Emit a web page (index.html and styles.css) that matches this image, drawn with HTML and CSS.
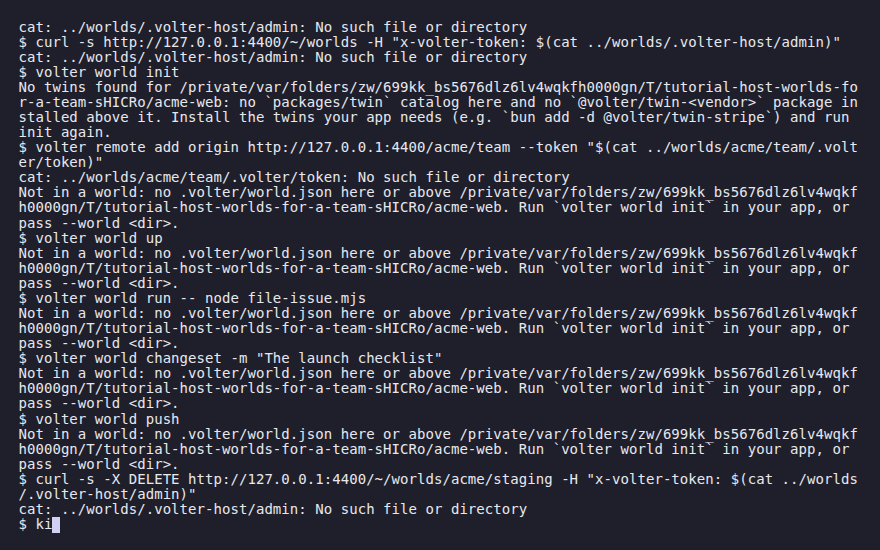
FILE: index.html
```html
<!DOCTYPE html>
<html>
<head>
<meta charset="utf-8">
<link rel="stylesheet" href="styles.css">
</head>
<body>
<pre class="term">cat: ../worlds/.volter-host/admin: No such file or directory
$ curl -s http://127.0.0.1:4400/~/worlds -H "x-volter-token: $(cat ../worlds/.volter-host/admin)"
cat: ../worlds/.volter-host/admin: No such file or directory
$ volter world init
No twins found for /private/var/folders/zw/699kk_bs5676dlz6lv4wqkfh0000gn/T/tutorial-host-worlds-fo
r-a-team-sHICRo/acme-web: no `packages/twin` catalog here and no `@volter/twin-&lt;vendor&gt;` package in
stalled above it. Install the twins your app needs (e.g. `bun add -d @volter/twin-stripe`) and run
init again.
$ volter remote add origin http://127.0.0.1:4400/acme/team --token "$(cat ../worlds/acme/team/.volt
er/token)"
cat: ../worlds/acme/team/.volter/token: No such file or directory
Not in a world: no .volter/world.json here or above /private/var/folders/zw/699kk_bs5676dlz6lv4wqkf
h0000gn/T/tutorial-host-worlds-for-a-team-sHICRo/acme-web. Run `volter world init` in your app, or
pass --world &lt;dir&gt;.
$ volter world up
Not in a world: no .volter/world.json here or above /private/var/folders/zw/699kk_bs5676dlz6lv4wqkf
h0000gn/T/tutorial-host-worlds-for-a-team-sHICRo/acme-web. Run `volter world init` in your app, or
pass --world &lt;dir&gt;.
$ volter world run -- node file-issue.mjs
Not in a world: no .volter/world.json here or above /private/var/folders/zw/699kk_bs5676dlz6lv4wqkf
h0000gn/T/tutorial-host-worlds-for-a-team-sHICRo/acme-web. Run `volter world init` in your app, or
pass --world &lt;dir&gt;.
$ volter world changeset -m "The launch checklist"
Not in a world: no .volter/world.json here or above /private/var/folders/zw/699kk_bs5676dlz6lv4wqkf
h0000gn/T/tutorial-host-worlds-for-a-team-sHICRo/acme-web. Run `volter world init` in your app, or
pass --world &lt;dir&gt;.
$ volter world push
Not in a world: no .volter/world.json here or above /private/var/folders/zw/699kk_bs5676dlz6lv4wqkf
h0000gn/T/tutorial-host-worlds-for-a-team-sHICRo/acme-web. Run `volter world init` in your app, or
pass --world &lt;dir&gt;.
$ curl -s -X DELETE http://127.0.0.1:4400/~/worlds/acme/staging -H "x-volter-token: $(cat ../worlds
/.volter-host/admin)"
cat: ../worlds/.volter-host/admin: No such file or directory
$ ki<span class="cursor"></span></pre>
</body>
</html>
```
FILE: styles.css
```css
html, body {
  margin: 0;
  padding: 0;
  background: #1e1f2b;
  width: 880px;
  height: 550px;
  overflow: hidden;
}
.term {
  margin: 0;
  padding: 19.5px 0 0 18.5px;
  font-family: "DejaVu Sans Mono", "Liberation Mono", monospace;
  font-size: 14px;
  line-height: 15.08px;
  letter-spacing: 0.05px;
  color: #e8e8ee;
  white-space: pre;
}
.cursor {
  display: inline-block;
  width: 8px;
  height: 16px;
  background: #cfd0f2;
  vertical-align: -4px;
}
```
